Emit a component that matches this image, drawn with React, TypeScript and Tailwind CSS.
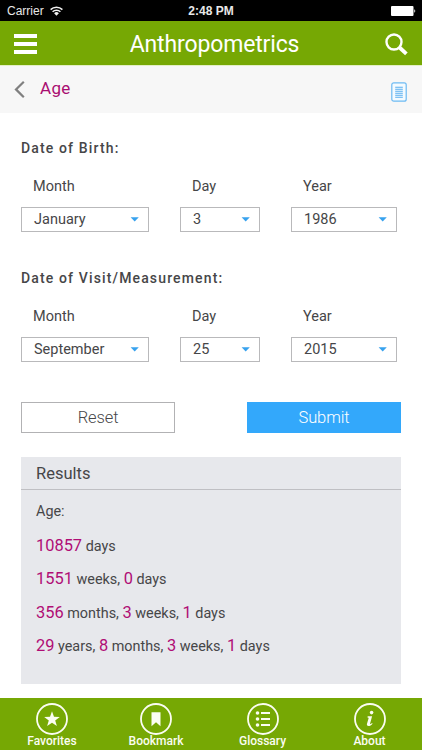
import type { ReactNode } from 'react';

const visitFields = [
  {
    title: 'Date of Birth:',
    month: 'January',
    day: '3',
    year: '1986',
  },
  {
    title: 'Date of Visit/Measurement:',
    month: 'September',
    day: '25',
    year: '2015',
  },
];

const results: [string, string][][] = [
  [['10857', 'days']],
  [
    ['1551', 'weeks'],
    ['0', 'days'],
  ],
  [
    ['356', 'months'],
    ['3', 'weeks'],
    ['1', 'days'],
  ],
  [
    ['29', 'years'],
    ['8', 'months'],
    ['3', 'weeks'],
    ['1', 'days'],
  ],
];

function Field({ label, value }: { label: string; value: string }) {
  return (
    <label className="block">
      <span className="block h-[31px] pl-3 pt-px text-[14.5px] leading-[20px]">
        {label}
      </span>
      <button className="flex h-[25px] w-full items-center justify-between border border-[#b9b9bb] bg-white pl-3 pr-[9px] text-[14.5px] leading-[23px]">
        <span>{value}</span>
        <svg width="9" height="5" viewBox="0 0 9 5">
          <path d="M0.6 0.3h8.2L4.7 4.5z" fill="#37a2ee" />
        </svg>
      </button>
    </label>
  );
}

function Tab({ label, children }: { label: string; children: ReactNode }) {
  return (
    <a className="flex flex-col items-center pt-[5px] text-[12px] font-medium leading-[14px]">
      <svg width="32" height="32" viewBox="0 0 32 32" fill="none">
        <circle cx="16" cy="16" r="15" stroke="#fbfdf2" strokeWidth="1.8" />
        {children}
      </svg>
      <span className="-mt-px">{label}</span>
    </a>
  );
}

export default function App() {
  return (
    <div className="flex h-[750px] w-[422px] flex-col overflow-hidden bg-white font-['Roboto',sans-serif] text-[#464648]">
      <div className="grid h-[21px] shrink-0 grid-cols-3 items-center bg-black font-['Liberation_Sans',sans-serif] text-[12px] text-[#e8e8e8]">
        <div className="flex items-center gap-[6px] pl-[7px]">
          <span>Carrier</span>
          <svg width="13" height="10" viewBox="0 0 13 10" fill="none">
            <path
              d="M0.6 3.6a8.3 8.3 0 0 1 11.8 0M2.6 5.8a5.5 5.5 0 0 1 7.8 0"
              stroke="#f2f2f2"
              strokeWidth="1.5"
            />
            <path d="M4.1 7.3a3.4 3.4 0 0 1 4.8 0L6.5 9.7z" fill="#f2f2f2" />
          </svg>
        </div>
        <span className="text-center font-bold">2:48 PM</span>
        <div className="flex justify-end pr-[6px]">
          <svg width="25" height="10" viewBox="0 0 25 10" fill="#fff">
            <rect width="22.5" height="10" rx="1" />
            <path d="M23.3 3.3a2 2 0 0 1 0 3.4z" />
          </svg>
        </div>
      </div>

      <header className="flex h-11 shrink-0 items-center justify-between bg-[#76a804] pl-[14px] pr-[14px] text-white">
        <div className="flex w-[23px] flex-col gap-1 pt-[2px]">
          <span className="h-1 bg-white" />
          <span className="h-1 bg-white" />
          <span className="h-1 bg-white" />
        </div>
        <h1 className="pl-[7px] pt-[3px] text-[23px] leading-[30px] tracking-[-0.15px]">
          Anthropometrics
        </h1>
        <svg width="23" height="23" viewBox="0 0 23 23" fill="none" className="mt-[2px]">
          <circle cx="9" cy="9" r="7.5" stroke="#fff" strokeWidth="2.4" />
          <path d="M14 14l7.4 6.8" stroke="#fff" strokeWidth="3.8" />
        </svg>
      </header>

      <div className="flex h-12 shrink-0 items-center border-t border-[#e3efc6] bg-[#f7f7f7] pl-[14px] pr-[15px]">
        <svg width="11" height="17" viewBox="0 0 11 17" fill="none" className="-mt-px">
          <path d="M9.8 0.8L2 8.4l7.8 7.8" stroke="#808080" strokeWidth="2.2" />
        </svg>
        <h2 className="-mt-px pl-[15px] text-[17px] tracking-[0.3px] text-[#a90d71]">
          Age
        </h2>
        <svg width="16" height="20" viewBox="0 0 16 20" fill="none" className="ml-auto mt-[4px]">
          <rect x="0.8" y="0.8" width="14.4" height="18.4" rx="2" fill="#f4fbff" stroke="#6dbaf2" strokeWidth="1.2" />
          <path
            d="M4.2 5.2h7.6M4.2 7.2h7.6M4.2 9.2h7.6M4.2 11.2h7.6M4.2 13.2h7.6M4.2 15.2h7.6"
            stroke="#58aff0"
            strokeWidth="1.1"
          />
        </svg>
      </div>

      <main className="flex flex-1 flex-col px-[21px] pt-[25px]">
        {visitFields.map((item) => (
          <section key={item.title} className="h-[130px]">
            <h3 className="mb-[18px] text-[14px] font-medium leading-[20px] tracking-[1.14px]">
              {item.title}
            </h3>
            <div className="grid grid-cols-[128px_80px_106px] gap-x-[31px]">
              <Field label="Month" value={item.month} />
              <Field label="Day" value={item.day} />
              <Field label="Year" value={item.year} />
            </div>
          </section>
        ))}

        <div className="mt-[4px] flex justify-between text-[16.5px] font-light tracking-[-0.1px]">
          <button className="h-[31px] w-[154px] border border-[#b2b2b4] pt-[2px]">
            Reset
          </button>
          <button className="h-[31px] w-[154px] bg-[#33a8fb] pt-[2px] text-white">
            Submit
          </button>
        </div>

        <section className="mt-6 h-[227px] bg-[#e7e8ec]">
          <h3 className="h-[33px] border-b border-[#bfbfc3] pl-[15px] text-[16.5px] leading-[33px]">
            Results
          </h3>
          <div className="pl-[15px] pt-[12px] text-[14.4px]">
            <p className="leading-[20px]">Age:</p>
            {results.map((row) => (
              <p key={row.length} className="h-[33.5px] pt-[6.5px] leading-[33.5px]">
                {row.map(([value, unit], i) => (
                  <span key={unit}>
                    <span className="text-[16.4px] text-[#b00d75]">{value}</span>{' '}
                    {unit}
                    {i < row.length - 1 && ', '}
                  </span>
                ))}
              </p>
            ))}
          </div>
        </section>
      </main>

      <footer className="grid h-[52px] shrink-0 grid-cols-[104px_104px_109px_105px] bg-[#76a804] text-[#fbfdf2]">
        <Tab label="Favorites">
          <path
            d="M16 8.2l2 5.5 5.8.2-4.6 3.6 1.7 5.6-4.9-3.3-4.9 3.3 1.7-5.6-4.6-3.6 5.8-.2z"
            fill="#fbfdf2"
          />
        </Tab>
        <Tab label="Bookmark">
          <path d="M11.5 9.3h9v14L16 19.3l-4.5 4z" fill="#fbfdf2" />
        </Tab>
        <Tab label="Glossary">
          <path d="M14 10h9M14 16h9M14 22h9" stroke="#fbfdf2" strokeWidth="1.8" />
          <g fill="#fbfdf2">
            <circle cx="10.5" cy="10" r="1.8" />
            <circle cx="10.5" cy="16" r="1.8" />
            <circle cx="10.5" cy="22" r="1.8" />
          </g>
        </Tab>
        <Tab label="About">
          <circle cx="17.6" cy="9.6" r="1.8" fill="#fbfdf2" />
          <path
            d="M13.7 13.3h4.4l-2 7.3c-.2.9.7.6 2-.5l.4.6c-1.2 1.5-2.6 2.3-4 2.3-1.4 0-1.9-.9-1.5-2.2l1.6-5.5c.2-.7-.3-.9-1.2-.9z"
            fill="#fbfdf2"
          />
        </Tab>
      </footer>
    </div>
  );
}
